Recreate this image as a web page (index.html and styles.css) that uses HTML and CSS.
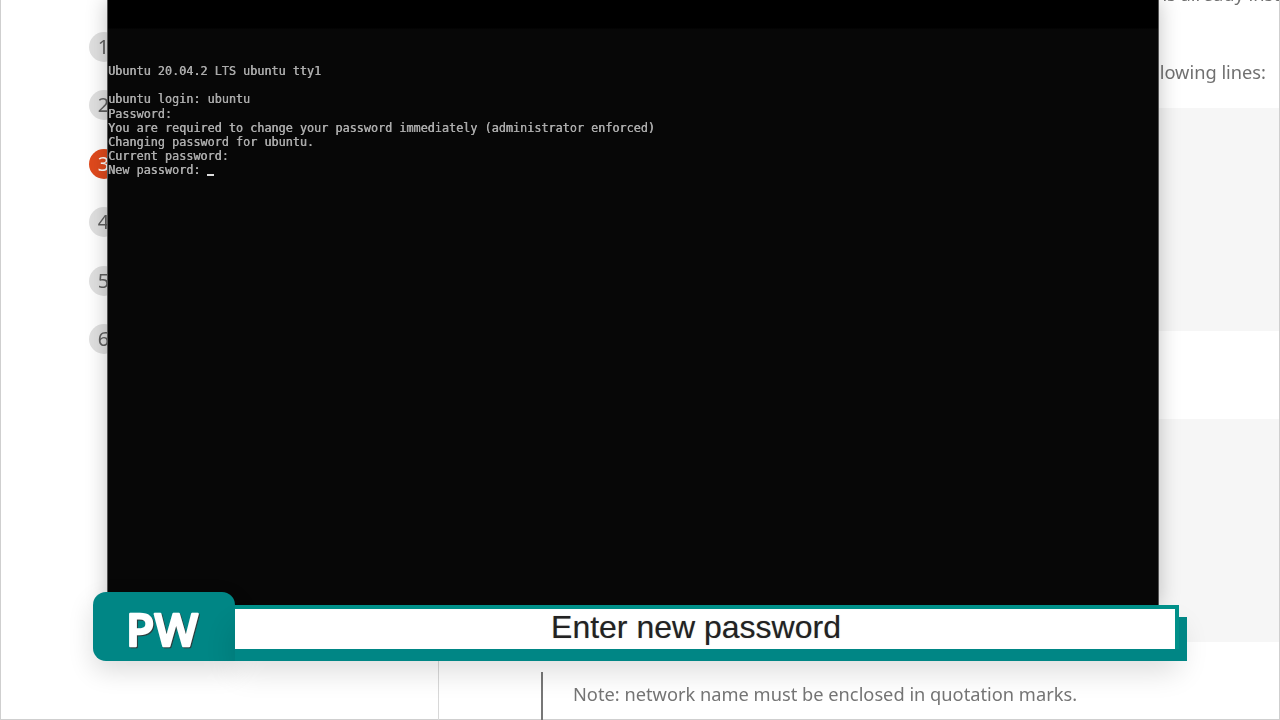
FILE: index.html
```html
<!DOCTYPE html>
<html lang="en">
<head>
<meta charset="utf-8">
<title>Enter new password</title>
<link rel="stylesheet" href="styles.css">
</head>
<body>
<div class="frame">
  <div class="page">
    <ol class="steps">
      <li class="step">1</li>
      <li class="step">2</li>
      <li class="step step-active">3</li>
      <li class="step">4</li>
      <li class="step">5</li>
      <li class="step">6</li>
    </ol>
    <main class="content">
      <section class="band band-intro">
        <p class="line line-top">If the wireless network is already installed</p>
        <p class="line line-lead">open the file and add the following lines:</p>
      </section>
      <section class="band band-code band-code-a"></section>
      <section class="band band-gap"></section>
      <section class="band band-code band-code-b"></section>
      <section class="band band-note">
        <blockquote class="note">Note: network name must be enclosed in quotation marks.</blockquote>
      </section>
    </main>
  </div>

  <div class="terminal">
    <pre class="console">Ubuntu 20.04.2 LTS ubuntu tty1

ubuntu login: ubuntu
Password:
You are required to change your password immediately (administrator enforced)
Changing password for ubuntu.
Current password:
New password: <span class="cursor"></span></pre>
  </div>

  <div class="lower-third">
    <div class="badge">
      <svg class="badge-logo" width="110" height="60" viewBox="0 0 110 60">
        <text class="badge-text" x="55" y="47" text-anchor="middle">PW</text>
      </svg>
    </div>
    <div class="caption">Enter new password</div>
  </div>
</div>
</body>
</html>
```

FILE: styles.css
```css
* { box-sizing: border-box; }
html, body { margin: 0; padding: 0; background: #fff; }
.frame {
  position: relative;
  width: 1280px;
  height: 720px;
  overflow: hidden;
  background: #fff;
  font-family: "Noto Sans", "Open Sans", sans-serif;
}
.page {
  display: flex;
  height: 720px;
  border: solid #cfcfcf;
  border-width: 0 1px 1px 1px;
  filter: blur(0.5px);
}
.steps {
  width: 437px;
  flex: none;
  list-style: none;
  margin: 0;
  padding: 32px 0 0 88px;
  display: flex;
  flex-direction: column;
  gap: 28.4px;
}
.step {
  width: 30px;
  height: 30px;
  border-radius: 50%;
  background: #e0e0e0;
  color: #5e5e5e;
  font-size: 20px;
  line-height: 30px;
  text-align: center;
  padding-right: 1px;
}
.step-active { background: #e04a1d; color: #fff; }
.content {
  flex: 1;
  display: flex;
  flex-direction: column;
  min-width: 0;
}
.band { flex: none; }
.band-intro { height: 108px; position: relative; overflow: hidden; }
.line {
  margin: 0;
  white-space: nowrap;
  font-size: 18.25px;
  color: #707070;
  text-align: right;
}
.line-top { margin: -19px -42px 0 0; line-height: 26px; }
.line-lead { margin: 52px 13px 0 0; line-height: 26px; }
.band-code { background: #f6f6f6; }
.band-code-a { height: 223px; }
.band-gap { height: 88px; }
.band-code-b { height: 223px; }
.band-note {
  flex: 1;
  border-left: 1px solid #d8d8d8;
  padding: 30px 0 0 102px;
}
.note {
  margin: 0;
  height: 60px;
  border-left: 2px solid #777;
  padding: 9px 0 0 30px;
  font-size: 18.25px;
  line-height: 26px;
  color: #757575;
  white-space: nowrap;
}
.terminal {
  position: absolute;
  left: 107px;
  top: 0;
  width: 1052px;
  height: 606px;
  background: linear-gradient(#000 0, #000 28px, #070707 29px);
  border: solid #555;
  border-width: 0 1px;
  box-shadow: 0 0 20px rgba(0, 0, 0, 0.24);
  padding: 64px 0 0 0;
}
.console {
  margin: 0;
  font-family: "DejaVu Sans Mono", "Liberation Mono", monospace;
  font-size: 11.8px;
  line-height: 14.2px;
  color: #ababab;
  text-shadow: 0.4px 0 0 #ababab;
  filter: blur(0.6px);
}
.cursor {
  display: inline-block;
  width: 7px;
  height: 2px;
  background: #ddd;
  vertical-align: -2px;
}
.lower-third {
  position: absolute;
  left: 93px;
  top: 592px;
  width: 1086px;
  height: 69px;
  display: flex;
  align-items: flex-start;
}
.badge {
  width: 142px;
  height: 69px;
  flex: none;
  background: #008685;
  border-radius: 13px 13px 0 13px;
  box-shadow: 0 10px 26px rgba(0, 0, 0, 0.14);
  display: flex;
  align-items: center;
  justify-content: center;
  padding: 5px 4px 0 0;
}
.badge-logo {
  display: block;
  filter: drop-shadow(1px 1px 0.6px #2c3c3c);
}
.badge-text {
  font-family: "Open Sans", "Noto Sans", sans-serif;
  font-weight: 600;
  font-size: 46px;
  fill: #fff;
  stroke: #fff;
  stroke-width: 2.4px;
  stroke-linejoin: round;
  stroke-linecap: round;
}
.caption {
  margin-top: 13px;
  flex: 1;
  height: 44px;
  background: #fff;
  border: solid #009089;
  border-width: 4px 4px 0 0;
  box-shadow: 8px 12px 0 #008685, 0 12px 0 #008685, 0 22px 30px rgba(0, 0, 0, 0.14);
  padding-right: 18px;
  font-family: "Liberation Sans", Arial, sans-serif;
  font-size: 32px;
  line-height: 36px;
  text-align: center;
  color: #222;
  text-shadow: 0 0 1px rgba(0, 0, 0, 0.35);
}
```
